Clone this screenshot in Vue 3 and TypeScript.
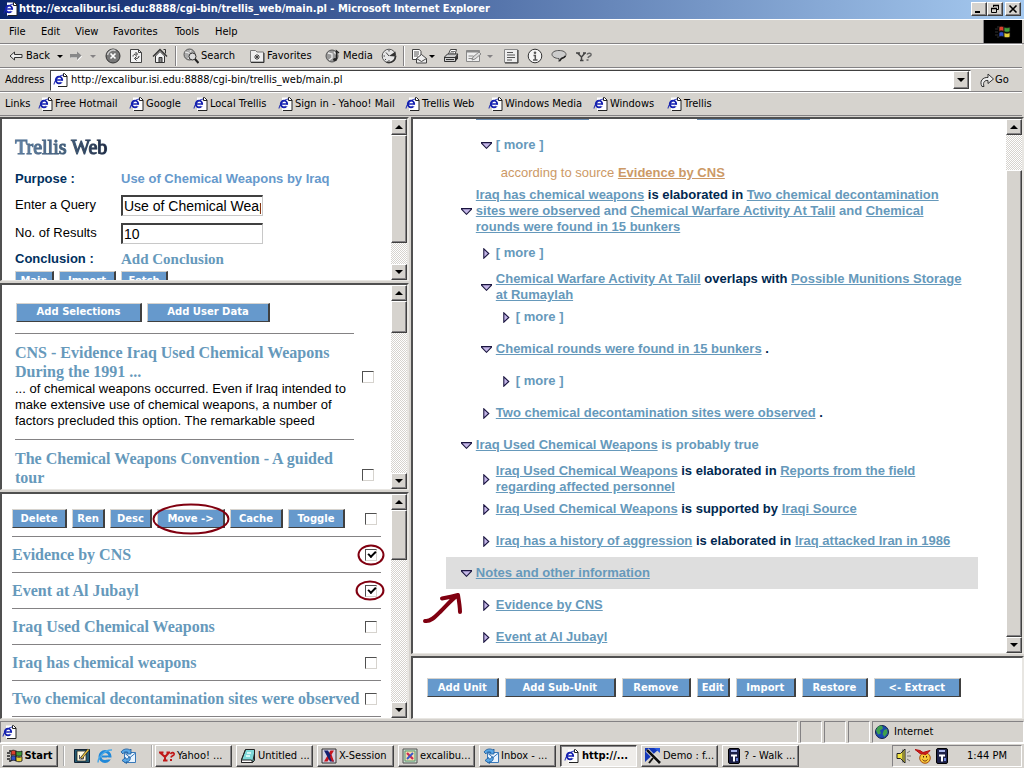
<script setup lang="ts">
import { ref } from 'vue'

type Kind = 'link' | 'rel' | 'plain'
interface Seg { k: Kind; t: string }
interface TreeRow {
  level: number
  open: boolean
  size: 'one' | 'tight' | 'two' | 'three'
  lines: Seg[][]
  marked?: boolean
}
interface Tool { icon?: string; label?: string; caret?: boolean; w: number; sep?: boolean; off?: boolean; name?: string }

const L = (t: string): Seg => ({ k: 'link', t })
const R = (t: string): Seg => ({ k: 'rel', t })
const P = (t: string): Seg => ({ k: 'plain', t })

const menus = [
  { t: 'File', w: 32 }, { t: 'Edit', w: 34 }, { t: 'View', w: 38 },
  { t: 'Favorites', w: 62 }, { t: 'Tools', w: 40 }, { t: 'Help', w: 40 },
]

const tools: Tool[] = [
  { icon: 'back', label: 'Back', caret: true, w: 60 },
  { icon: 'fwd', caret: true, w: 36, off: true, name: 'Forward' },
  { icon: 'stop', w: 23, name: 'Stop' },
  { icon: 'refresh', w: 24, name: 'Refresh' },
  { icon: 'home', w: 24, name: 'Home' },
  { sep: true, w: 8 },
  { icon: 'search', label: 'Search', w: 66 },
  { icon: 'fav', label: 'Favorites', w: 76 },
  { icon: 'media', label: 'Media', w: 56 },
  { icon: 'history', w: 22, name: 'History' },
  { sep: true, w: 8 },
  { icon: 'mail', caret: true, w: 32, name: 'Mail' },
  { icon: 'print', w: 22, name: 'Print' },
  { icon: 'edit', caret: true, w: 36, off: true, name: 'Edit page' },
  { icon: 'discuss', w: 25, name: 'Discuss' },
  { icon: 'info', w: 24, name: 'Related' },
  { icon: 'chat', w: 24, name: 'Messenger' },
  { icon: 'ymsg', w: 25, name: 'Yahoo' },
]

const links = [
  { t: 'Free Hotmail', w: 91 }, { t: 'Google', w: 64 }, { t: 'Local Trellis', w: 85 },
  { t: 'Sign in - Yahoo! Mail', w: 127 }, { t: 'Trellis Web', w: 83 },
  { t: 'Windows Media', w: 105 }, { t: 'Windows', w: 74 }, { t: 'Trellis', w: 60 },
]

const address = ref('http://excalibur.isi.edu:8888/cgi-bin/trellis_web/main.pl')
const query = ref('Use of Chemical Weapons by Iraq')
const results = ref('10')

const formButtons = [{ t: 'Main', w: 39 }, { t: 'Import', w: 57 }, { t: 'Fetch', w: 47 }]
const evidenceButtons = [{ t: 'Add Selections', w: 126 }, { t: 'Add User Data', w: 123 }]
const unitButtons = [
  { t: 'Delete', w: 55 }, { t: 'Ren', w: 33 }, { t: 'Desc', w: 42 },
  { t: 'Move ->', w: 68, ring: true }, { t: 'Cache', w: 53 }, { t: 'Toggle', w: 57 },
]
const treeButtons = [
  { t: 'Add Unit', w: 72 }, { t: 'Add Sub-Unit', w: 111 }, { t: 'Remove', w: 69 },
  { t: 'Edit', w: 33 }, { t: 'Import', w: 60 }, { t: 'Restore', w: 66 }, { t: '<- Extract', w: 87 },
]

const hits = ref([
  {
    title: ['CNS - Evidence Iraq Used Chemical Weapons', 'During the 1991 ...'],
    body: ['... of chemical weapons occurred. Even if Iraq intended to', 'make extensive use of chemical weapons, a number of', 'factors precluded this option. The remarkable speed'],
    on: false,
  },
  { title: ['The Chemical Weapons Convention - A guided', 'tour'], body: [] as string[], on: false },
])

const all = ref(false)
const units = ref([
  { t: 'Evidence by CNS', on: true, ring: 'ring-a' },
  { t: 'Event at Al Jubayl', on: true, ring: 'ring-b' },
  { t: 'Iraq Used Chemical Weapons', on: false, ring: '' },
  { t: 'Iraq has chemical weapons', on: false, ring: '' },
  { t: 'Two chemical decontamination sites were observed', on: false, ring: '' },
])

const treeTop: TreeRow[] = [
  { level: 2, open: true, size: 'one', lines: [[P('[ more ]')]] },
]
const tree: TreeRow[] = [
  {
    level: 1, open: true, size: 'three', lines: [
      [L('Iraq has chemical weapons'), R(' is elaborated in '), L('Two chemical decontamination')],
      [L('sites were observed'), P(' and '), L('Chemical Warfare Activity At Talil'), P(' and '), L('Chemical')],
      [L('rounds were found in 15 bunkers')],
    ],
  },
  { level: 2, open: false, size: 'one', lines: [[P('[ more ]')]] },
  {
    level: 2, open: true, size: 'two', lines: [
      [L('Chemical Warfare Activity At Talil'), R(' overlaps with '), L('Possible Munitions Storage')],
      [L('at Rumaylah')],
    ],
  },
  { level: 3, open: false, size: 'tight', lines: [[P('[ more ]')]] },
  { level: 2, open: true, size: 'one', lines: [[L('Chemical rounds were found in 15 bunkers'), R(' .')]] },
  { level: 3, open: false, size: 'one', lines: [[P('[ more ]')]] },
  { level: 2, open: false, size: 'one', lines: [[L('Two chemical decontamination sites were observed'), R(' .')]] },
  { level: 1, open: true, size: 'one', lines: [[L('Iraq Used Chemical Weapons'), P(' is probably true')]] },
  {
    level: 2, open: false, size: 'two', lines: [
      [L('Iraq Used Chemical Weapons'), R(' is elaborated in '), L('Reports from the field')],
      [L('regarding affected personnel')],
    ],
  },
  { level: 2, open: false, size: 'tight', lines: [[L('Iraq Used Chemical Weapons'), R(' is supported by '), L('Iraqi Source')]] },
  { level: 2, open: false, size: 'one', lines: [[L('Iraq has a history of aggression'), R(' is elaborated in '), L('Iraq attacked Iran in 1986')]] },
  { level: 1, open: true, size: 'one', marked: true, lines: [[L('Notes and other information')]] },
  { level: 2, open: false, size: 'one', lines: [[L('Evidence by CNS')]] },
  { level: 2, open: false, size: 'one', lines: [[L('Event at Al Jubayl')]] },
]

const bars = {
  form: { before: 0, thumb: 84, after: 16 },
  evidence: { before: 0, thumb: 18, after: 82 },
  units: { before: 0, thumb: 25, after: 75 },
  tree: { before: 7, thumb: 93, after: 0 },
}

const tasks = [
  { t: 'Yahoo! ...', icon: 'yahoo' }, { t: 'Untitled ...', icon: 'note' }, { t: 'X-Session', icon: 'xses' },
  { t: 'excalibu...', icon: 'xwin' }, { t: 'Inbox - ...', icon: 'outlook' }, { t: 'http://...', icon: 'page', active: true },
  { t: 'Demo : f...', icon: 'demo' }, { t: '? - Walk ...', icon: 'walk' },
]
</script>

<template>
  <svg class="defs" aria-hidden="true">
    <symbol id="i-page" viewBox="0 0 16 16">
      <path d="M4 1.500h7.500l2.500 2.500v10.500H4z" fill="#fff" />
      <path d="M10.500 1.500h1l2.500 2.500v10.500H5" fill="none" stroke="#222" />
      <path d="M10.500 1.500v3H14" fill="none" stroke="#222" />
      <ellipse cx="6" cy="8" rx="3.200" ry="3.400" fill="#fff" stroke="#1420b0" stroke-width="1.900" />
      <path d="M3 8h6.500" stroke="#1420b0" stroke-width="1.500" />
      <path d="M7.500 9.600h3" stroke="#fff" stroke-width="1.500" />
      <path d="M1 12.500C1.500 8 5.500 4 10 3" fill="none" stroke="#1420b0" />
    </symbol>
    <symbol id="i-back" viewBox="0 0 16 16"><path d="M2 8l4.500-4v2.500H14v3H6.500V12z" fill="#eee" stroke="#333" /></symbol>
    <symbol id="i-fwd" viewBox="0 0 16 16"><path d="M14 8.500L9.500 4v2.500H3v3.500h6.500v3z" fill="#fff" /><path d="M13.500 7.500L9 3.500V6H2v3.500h7V12z" fill="#888" /></symbol>
    <symbol id="i-stop" viewBox="0 0 16 16"><circle cx="8" cy="8" r="7" fill="#777" stroke="#333" /><path d="M2.500 7a6 6 0 0 1 8-4.500" fill="none" stroke="#ccc" stroke-width="1.500" /><path d="M5.500 5.500l5 5m0-5l-5 5" stroke="#fff" stroke-width="1.700" /></symbol>
    <symbol id="i-refresh" viewBox="0 0 16 16"><path d="M2.500 1.500h8l3 3v10h-11z" fill="#f4f4f4" stroke="#444" /><path d="M10.500 1.500v3h3" fill="none" stroke="#444" /><path d="M5 8.500c0-2 1.500-2.500 3.500-2.500M7.500 4l2 2-2 2M11 8c0 2-1.500 2.500-3.500 2.500M8.500 8.500l-2 2 2 2" fill="none" stroke="#333" /></symbol>
    <symbol id="i-home" viewBox="0 0 16 16"><path d="M3.500 8v6.500h9V8L8 3.500z" fill="#f4f4f4" stroke="#333" /><path d="M1 8.500l7-7 7 7" fill="none" stroke="#333" stroke-width="1.400" /><path d="M11.500 1.500h2v4" fill="none" stroke="#333" /><path d="M7 9.500h3v5H7z" fill="#888" stroke="#333" /></symbol>
    <symbol id="i-search" viewBox="0 0 16 16"><circle cx="6.500" cy="6.500" r="5.500" fill="#aaa" stroke="#555" /><path d="M2 4l4 1 1 3-2 3M8 2l-1 2" fill="none" stroke="#eee" /><circle cx="9.500" cy="8.500" r="3.500" fill="#ddd" stroke="#333" /><path d="M12 11l3.500 4" stroke="#222" stroke-width="2" /></symbol>
    <symbol id="i-fav" viewBox="0 0 16 16"><path d="M1.500 4V2.500h5L8 4h6.500v10h-13z" fill="#eee" stroke="#777" /><path d="M15 5v9.500H2" fill="none" stroke="#333" /><path d="M8 6v6M5 9h6M6 7l4 4m0-4l-4 4" stroke="#444" /></symbol>
    <symbol id="i-media" viewBox="0 0 16 16"><circle cx="7" cy="8" r="6" fill="#999" stroke="#555" /><path d="M3 5l4 1v4l-3 2M9 4l3 3" fill="none" stroke="#eee" stroke-width="1.300" /><path d="M11.500 11V3l2.500 2" fill="none" stroke="#222" stroke-width="1.400" /><ellipse cx="10" cy="11.500" rx="2" ry="1.600" fill="#222" /></symbol>
    <symbol id="i-history" viewBox="0 0 16 16"><circle cx="8" cy="8" r="6.800" fill="#e6e6e6" stroke="#555" /><path d="M8 8l6.500-4.500v5z" fill="#333" /><path d="M14.500 8a6.500 6.500 0 0 1-9 6" fill="none" stroke="#333" stroke-width="1.600" /><path d="M8 8L5 4.500M8 3.500V2M2.500 8h1.500M8 12v1.500M4 12l1-1" stroke="#444" /></symbol>
    <symbol id="i-mail" viewBox="0 0 16 16"><path d="M1.500 1.500h7l1.500 2v8h-8.500z" fill="#fff" stroke="#444" /><path d="M3 4h5M3 6h5M3 8h4" stroke="#555" /><path d="M5.500 10.500l5-4 5 4v4.500h-10z" fill="#eee" stroke="#444" /><path d="M5.500 10.500l5 3 5-3" fill="none" stroke="#444" /></symbol>
    <symbol id="i-print" viewBox="0 0 16 16"><path d="M5.500 6l2-4.500h6L12 6.500" fill="#fff" stroke="#444" /><path d="M8 3.500h4M7 5h4" stroke="#777" /><path d="M1.500 9l3-3h10.500l-2.500 3v4.500h-11z" fill="#ccc" stroke="#333" /><path d="M12.500 9L15 6.500v4l-2.500 3z" fill="#333" /><path d="M1.500 9.500h11M3 11.500h8" stroke="#333" /></symbol>
    <symbol id="i-edit" viewBox="0 0 16 16"><path d="M1.500 2.500h13v11h-13z" fill="#eee" stroke="#888" /><path d="M1.500 3.500h13" stroke="#888" stroke-width="2" /><path d="M3.500 8h5M3.500 10.500h4" stroke="#888" /><path d="M7 12l1-3 6-5 2 2-6 5z" fill="#ddd" stroke="#888" /></symbol>
    <symbol id="i-discuss" viewBox="0 0 16 16"><path d="M1.500 1.500h13v13h-13z" fill="#eee" stroke="#888" /><path d="M15 2v13H2" fill="none" stroke="#333" /><path d="M4 4.500h6M4 7h8M4 9.500h8M4 12h5" stroke="#555" /></symbol>
    <symbol id="i-info" viewBox="0 0 16 16"><circle cx="8" cy="8" r="6.800" fill="#f6f6f6" stroke="#333" /><circle cx="8" cy="4.700" r="1.300" fill="#555" /><path d="M6.500 7.500h1.800v4M6 12h4.500" fill="none" stroke="#555" stroke-width="1.500" /></symbol>
    <symbol id="i-chat" viewBox="0 0 16 16"><path d="M8 2.500c4 0 7 1.500 7 4 0 2-2 3.500-5 4L8 13.500v-3C4 10.500 1 8.500 1 6.500c0-2.500 3-4 7-4z" fill="#ccc" stroke="#555" /><path d="M14.500 8c-1 1.500-2.500 2-4 2.500l-2 2.500" fill="none" stroke="#222" stroke-width="1.500" /></symbol>
    <symbol id="i-ymsg" viewBox="0 0 16 16"><path d="M0 5h4M1.500 5l4 4v3.500M9 5L5.500 9M7 5h3M4 12.500h3.500" fill="none" stroke="#444" stroke-width="1.500" /><path d="M11 6.500c1-2 4.500-1.500 4 .5-.5 1.500-2.500 1-3 3" fill="none" stroke="#666" stroke-width="1.500" /><path d="M10.500 12h2" stroke="#666" stroke-width="1.600" /></symbol>
    <symbol id="i-go" viewBox="0 0 16 16"><path d="M3 14.500C0 9 4 5 9 5.500V2l5.500 5L9 11.500V8.500C6 8 3.500 10 5 14.500z" fill="#eee" stroke="#333" /></symbol>
    <symbol id="i-flag" viewBox="0 0 16 16">
      <path d="M0 5h3M0 8h3M0 11h3M2 3h2M2 13h2" stroke="#222" stroke-width="1.500" />
      <path d="M4 3c1.500-1 3-1 5 0v4.500c-2-1-3.500-1-5 0z" fill="#d8402c" stroke="#111" stroke-width=".8" />
      <path d="M9 3c2 1 4 1 6 0v4.500c-2 1-4 1-6 0z" fill="#3f9c3a" stroke="#111" stroke-width=".8" />
      <path d="M4 8.500c1.500-1 3-1 5 0V13c-2-1-3.500-1-5 0z" fill="#2e50c8" stroke="#111" stroke-width=".8" />
      <path d="M9 8.500c2 1 4 1 6 0V13c-2 1-4 1-6 0z" fill="#e6cf3a" stroke="#111" stroke-width=".8" />
    </symbol>
    <symbol id="i-desk" viewBox="0 0 16 16"><path d="M.5 1.500h15v13H.5z" fill="#245c74" stroke="#123" /><path d="M3 3h9v10H3z" fill="#fffbe0" stroke="#222" stroke-width=".8" /><path d="M5.500 7v4h4V7" fill="none" stroke="#556" /><path d="M7 10.500L14.500 1.500" stroke="#222" stroke-width="2.600" /><path d="M7.500 10L14.500 1.500" stroke="#e7c33e" stroke-width="1.300" /></symbol>
    <symbol id="i-ie" viewBox="0 0 16 16"><circle cx="8" cy="8.500" r="5" fill="none" stroke="#2088d8" stroke-width="3" /><path d="M5 8.500h9" stroke="#2088d8" stroke-width="2" /><path d="M10 10.500h4.500" stroke="#d6d3ce" stroke-width="2" /><path d="M1 14.500C1 9 8 1.500 15 2" fill="none" stroke="#48a8e8" stroke-width="1.500" /></symbol>
    <symbol id="i-outlook" viewBox="0 0 16 16"><path d="M4.500 4.500h11v10h-11z" fill="#e8f4ff" stroke="#3878b8" /><path d="M4.500 5l5.500 4.500L15.500 5" fill="none" stroke="#3878b8" /><path d="M1 4c2-3 6-4 9-2l1-1v5H6.500L8 4.500C6 3 3.500 4 3 6z" fill="#58a8e8" stroke="#1a5898" stroke-width=".8" /><path d="M10 9c1 3-1 5-4 5l.5 1.500L2 12.500 5.500 9.500l.5 1.500c2 0 3-1 2.500-2z" fill="#58a8e8" stroke="#1a5898" stroke-width=".8" /></symbol>
    <symbol id="i-yahoo" viewBox="0 0 16 16"><path d="M0 4.500h4.500M1.500 5l4.500 4v3.500M9.500 5L6 9M7.500 4.500H11M4 12.500h4.500" fill="none" stroke="#c01818" stroke-width="2" /><path d="M11.500 6c1-2 4-1.500 3.500.5-.5 1.500-2.500 1-3 3" fill="none" stroke="#c01818" stroke-width="1.800" /><path d="M11 12h2" stroke="#c01818" stroke-width="2" /></symbol>
    <symbol id="i-note" viewBox="0 0 16 16"><path d="M5.500 1.500h9v11l-2 2h-11v-3z" fill="#7ed8d8" stroke="#222" /><path d="M1.500 12l4-10.500M12.500 14.500l2-9" stroke="#222" /><path d="M1.500 12h10l1 2.500h-11z" fill="#fff" stroke="#222" /><path d="M7 5h4M6 8h4" stroke="#eff" stroke-width="1.500" /></symbol>
    <symbol id="i-xses" viewBox="0 0 16 16"><path d="M1 1h14v14H1z" fill="#d4d0e0" stroke="#333" /><path d="M13 2.500h-3.500L3 13.500h3.500z" fill="#c8141c" /><path d="M3 2.500h4l6 11H9z" fill="#142070" /><path d="M9 9l1.500-2.500 2.500 7H11z" fill="#c8141c" /></symbol>
    <symbol id="i-xwin" viewBox="0 0 16 16"><path d="M1 1h14v14H1z" fill="#c8dccc" stroke="#555" /><path d="M3 3h10v10H3z" fill="#f6dcb0" stroke="#5a9a70" /><path d="M5 5l6 6" stroke="#d02850" stroke-width="2.200" /><path d="M11 5l-6 6" stroke="#3858c8" stroke-width="2" /></symbol>
    <symbol id="i-demo" viewBox="0 0 16 16"><path d="M0 0h15L0 14z" fill="#1438b8" /><path d="M9 0h6v5z" fill="#2858e0" /><path d="M2 2l12 12" stroke="#fff" stroke-width="4" /><path d="M2 2l13 13" stroke="#111" stroke-width="2.600" /><path d="M4 15l4-5" stroke="#111" stroke-width="2" /></symbol>
    <symbol id="i-walk" viewBox="0 0 16 16"><rect x="2.500" y=".5" width="11" height="15" rx="1.500" fill="#1c2048" stroke="#000" /><path d="M5 3h6" stroke="#a8b4e8" stroke-width="2" /><path d="M5 6.500h6v2H9v5H7v-5H5z" fill="#fff" /><path d="M10 10h2v3h-2z" fill="#6c84d8" /></symbol>
    <symbol id="i-globe" viewBox="0 0 16 16"><circle cx="8" cy="8" r="6.500" fill="#1c48b0" stroke="#102048" /><path d="M4 2.500l4-1 1 3-3 2 1 3-3 1-2-4zM10 6l3-1 .5 4-3 4-2-3z" fill="#3fa04c" /></symbol>
    <symbol id="i-sound" viewBox="0 0 16 16"><path d="M1 5.500h3.500L9 1v14l-4.500-4.500H1z" fill="#f2e440" stroke="#222" /><path d="M7 1.500v13" stroke="#333" /><path d="M11 5l3-2M11 8h4M11 11l3 2" stroke="#777" /></symbol>
    <symbol id="i-smile" viewBox="0 0 16 16"><circle cx="10" cy="10" r="5.300" fill="#f6c838" stroke="#a85010" /><path d="M0 1.500l5 1 3 2 7-2-4 4-6-1z" fill="#d01c1c" stroke="#b01010" /><path d="M7.500 11.500c1.500 2 3.500 2 5 0" fill="none" stroke="#702808" /><path d="M8.500 8v1.500M11.500 8v1.500" stroke="#402008" /></symbol>
    <symbol id="i-down" viewBox="0 0 11 7"><path d="M1 1h9L5.500 5.700z" fill="#c4b6e8" /><path d="M0 .6h11L5.500 6.300z" fill="none" stroke="#1a1440" stroke-width="1.100" /></symbol>
    <symbol id="i-right" viewBox="0 0 7 11"><path d="M.8.800v9.400L5.800 5.500z" fill="#c4b6e8" stroke="#1a1440" stroke-width="1.100" /></symbol>
  </svg>

  <div class="screen">
    <header class="title">
      <svg class="ic"><use href="#i-page" /></svg>
      <h1>http://excalibur.isi.edu:8888/cgi-bin/trellis_web/main.pl - Microsoft Internet Explorer</h1>
      <div class="winbtns">
        <button class="raised" aria-label="Minimize"><svg viewBox="0 0 12 10"><path d="M2 8h5" stroke="#000" stroke-width="2" /></svg></button>
        <button class="raised" aria-label="Restore"><svg viewBox="0 0 12 10"><path d="M4.500 3V1.500h5v4H8M2.500 4.500h5v4h-5z" fill="none" stroke="#000" /><path d="M4 1.500h6M2 4.500h6" stroke="#000" stroke-width="1.600" /></svg></button>
        <button class="raised apart" aria-label="Close"><svg viewBox="0 0 12 10"><path d="M2.500 1.500l7 7m0-7l-7 7" stroke="#000" stroke-width="1.600" /></svg></button>
      </div>
    </header>

    <div class="menurow">
      <nav class="menus">
        <button v-for="m in menus" :key="m.t" class="flat" :style="{ width: m.w + 'px' }">{{ m.t }}</button>
      </nav>
      <div class="throb"><svg class="ic"><use href="#i-flag" /></svg></div>
    </div>

    <div class="bar tools">
      <template v-for="(b, i) in tools" :key="i">
        <span v-if="b.sep" class="sep" :style="{ width: b.w + 'px' }"></span>
        <button v-else class="flat tool" :class="{ texty: b.label || b.caret, off: b.off }" :style="{ width: b.w + 'px' }" :aria-label="b.label || b.name">
          <svg class="ic"><use :href="'#i-' + b.icon" /></svg>
          <span v-if="b.label">{{ b.label }}</span>
          <i v-if="b.caret" class="caret" :class="{ far: b.label }"></i>
        </button>
      </template>
    </div>

    <div class="bar addr">
      <label for="addr">Address</label>
      <div class="combo">
        <svg class="ic"><use href="#i-page" /></svg>
        <input id="addr" v-model="address" type="text" />
        <button class="raised drop" aria-label="Show addresses"><i class="caret"></i></button>
      </div>
      <button class="flat go"><svg class="ic"><use href="#i-go" /></svg>Go</button>
    </div>

    <div class="bar links">
      <span class="lbl">Links</span>
      <a v-for="(l, i) in links" :key="i" href="#" :style="{ width: l.w + 'px' }"><svg class="ic"><use href="#i-page" /></svg>{{ l.t }}</a>
    </div>

    <main class="frames">
      <div class="col">
        <section class="frame f-form">
          <div class="body">
            <h2 class="logo">Trellis Web</h2>
            <div class="grid">
              <span class="key">Purpose :</span><span class="val">Use of Chemical Weapons by Iraq</span>
              <label for="q">Enter a Query</label><input id="q" v-model="query" type="text" />
              <label for="n">No. of Results</label><input id="n" v-model="results" type="text" />
              <span class="key">Conclusion :</span><a class="head" href="#">Add Conclusion</a>
            </div>
            <div class="btns">
              <button v-for="b in formButtons" :key="b.t" class="btn" :style="{ width: b.w + 'px' }">{{ b.t }}</button>
            </div>
          </div>
          <div class="scroll">
            <button class="raised" aria-label="Scroll up"><i class="caret up"></i></button>
            <div class="track"><div class="raised" :style="{ flexGrow: bars.form.thumb }"></div><div :style="{ flexGrow: bars.form.after }"></div></div>
            <button class="raised" aria-label="Scroll down"><i class="caret"></i></button>
          </div>
        </section>

        <section class="frame f-evid">
          <div class="body">
            <div class="btns">
              <button v-for="b in evidenceButtons" :key="b.t" class="btn" :style="{ width: b.w + 'px' }">{{ b.t }}</button>
            </div>
            <article v-for="(h, i) in hits" :key="i" class="hit">
              <div class="txt">
                <label class="head" :for="'hit' + i"><span v-for="t in h.title" :key="t">{{ t }}</span></label>
                <p v-if="h.body.length"><span v-for="t in h.body" :key="t">{{ t }}</span></p>
              </div>
              <input :id="'hit' + i" v-model="h.on" type="checkbox" />
            </article>
          </div>
          <div class="scroll">
            <button class="raised" aria-label="Scroll up"><i class="caret up"></i></button>
            <div class="track"><div class="raised" :style="{ flexGrow: bars.evidence.thumb }"></div><div :style="{ flexGrow: bars.evidence.after }"></div></div>
            <button class="raised" aria-label="Scroll down"><i class="caret"></i></button>
          </div>
        </section>

        <section class="frame f-units">
          <div class="body">
            <div class="unit first">
              <div class="btns">
                <span v-for="b in unitButtons" :key="b.t" class="hold">
                  <button class="btn" :style="{ width: b.w + 'px' }">{{ b.t }}</button>
                  <svg v-if="b.ring" class="ring ring-m" viewBox="0 0 78 32"><ellipse cx="39" cy="16" rx="37.500" ry="14.500" /></svg>
                </span>
              </div>
              <input v-model="all" type="checkbox" aria-label="Select all" />
            </div>
            <div v-for="(u, i) in units" :key="u.t" class="unit">
              <label class="head" :for="'unit' + i">{{ u.t }}</label>
              <span class="hold">
                <input :id="'unit' + i" v-model="u.on" type="checkbox" />
                <svg v-if="u.ring" class="ring" :class="u.ring" viewBox="0 0 28 22" preserveAspectRatio="none"><ellipse cx="14" cy="11" rx="12.500" ry="9.500" /></svg>
              </span>
            </div>
          </div>
          <div class="scroll">
            <button class="raised" aria-label="Scroll up"><i class="caret up"></i></button>
            <div class="track"><div class="raised" :style="{ flexGrow: bars.units.thumb }"></div><div :style="{ flexGrow: bars.units.after }"></div></div>
            <button class="raised" aria-label="Scroll down"><i class="caret"></i></button>
          </div>
        </section>
      </div>

      <div class="col">
        <section class="frame f-tree">
          <div class="body">
            <div class="cut"><i></i><i></i></div>
            <div v-for="(r, i) in treeTop" :key="'t' + i" class="row" :class="[r.size, 'l' + r.level]">
              <span class="tw"><svg class="dn"><use href="#i-down" /></svg></span>
              <div><div v-for="(ln, j) in r.lines" :key="j" class="ln"><span v-for="(s, k) in ln" :key="k" :class="s.k">{{ s.t }}</span></div></div>
            </div>
            <p class="src">according to source <a href="#">Evidence by CNS</a></p>
            <div v-for="(r, i) in tree" :key="i" class="row" :class="[r.size, 'l' + r.level, { marked: r.marked }]">
              <span class="tw">
                <svg v-if="r.open" class="dn"><use href="#i-down" /></svg>
                <svg v-else class="rt"><use href="#i-right" /></svg>
              </span>
              <div>
                <div v-for="(ln, j) in r.lines" :key="j" class="ln">
                  <template v-for="(s, k) in ln" :key="k"><a v-if="s.k === 'link'" href="#">{{ s.t }}</a><span v-else :class="s.k">{{ s.t }}</span></template>
                </div>
              </div>
              <svg v-if="r.marked" class="arrow" viewBox="0 0 40 32"><path d="M3 29c6 1 11-5 16-10S30 7 36 3M20 6.500c6-1 11-2 16-3.500 1 6 2 12 2 17" /></svg>
            </div>
          </div>
          <div class="scroll">
            <button class="raised" aria-label="Scroll up"><i class="caret up"></i></button>
            <div class="track"><div :style="{ flexGrow: bars.tree.before }"></div><div class="raised" :style="{ flexGrow: bars.tree.thumb }"></div></div>
            <button class="raised" aria-label="Scroll down"><i class="caret"></i></button>
          </div>
        </section>
        <section class="frame f-acts">
          <div class="body btns">
            <button v-for="b in treeButtons" :key="b.t" class="btn" :style="{ width: b.w + 'px' }">{{ b.t }}</button>
          </div>
        </section>
      </div>
    </main>

    <footer class="status">
      <div class="cell grow"><svg class="ic"><use href="#i-page" /></svg></div>
      <div class="cell small"></div><div class="cell small"></div><div class="cell small"></div>
      <div class="cell zone"><svg class="ic"><use href="#i-globe" /></svg>Internet</div>
    </footer>

    <div class="taskbar">
      <button class="raised start"><svg class="ic"><use href="#i-flag" /></svg>Start</button>
      <div class="quick">
        <button class="flat" aria-label="Show desktop"><svg class="ic"><use href="#i-desk" /></svg></button>
        <button class="flat" aria-label="Internet Explorer"><svg class="ic"><use href="#i-ie" /></svg></button>
        <button class="flat" aria-label="Outlook Express"><svg class="ic"><use href="#i-outlook" /></svg></button>
      </div>
      <div class="tasks">
        <button v-for="t in tasks" :key="t.t" class="raised task" :class="{ active: t.active }"><svg class="ic"><use :href="'#i-' + t.icon" /></svg>{{ t.t }}</button>
      </div>
      <div class="tray">
        <svg class="ic"><use href="#i-sound" /></svg><svg class="ic"><use href="#i-smile" /></svg><svg class="ic"><use href="#i-walk" /></svg>
        <time>1:44 PM</time>
      </div>
    </div>
  </div>
</template>

<style>
body { margin: 0; background: #d6d3ce; }
</style>

<style scoped>
.defs { position: absolute; width: 0; height: 0; }
.screen {
  display: flex; flex-direction: column; height: 100vh; overflow: hidden;
  background: #d6d3ce; color: #000;
  font-family: "DejaVu Sans Condensed", "DejaVu Sans", sans-serif; font-size: 11px; line-height: 14px;
}
.screen * { box-sizing: border-box; }
button, input { font: inherit; color: inherit; margin: 0; padding: 0; }
h1, h2, p { margin: 0; font-weight: normal; }
a { color: inherit; text-decoration: none; }
.ic { width: 16px; height: 16px; flex: none; display: block; }
.flat { border: 0; background: none; text-align: left; white-space: nowrap; }
.raised {
  background: #d6d3ce; border: 1px solid; border-color: #fff #404040 #404040 #fff;
  box-shadow: inset -1px -1px 0 #848284; display: flex; align-items: center; justify-content: center;
}
.caret { width: 0; height: 0; border: 4px solid transparent; border-bottom: 0; border-top-color: #000; }
.caret.up { border: 4px solid transparent; border-top: 0; border-bottom-color: #000; }

.title { display: flex; align-items: center; flex: none; height: 19px; padding: 0 3px 1px; background: linear-gradient(90deg, #0a246a, #a6caf0); color: #fff; }
.title h1 { flex: 1; font-size: 11px; font-weight: bold; white-space: nowrap; overflow: hidden; }
.winbtns { display: flex; }
.winbtns button { width: 16px; height: 14px; }
.winbtns svg { width: 12px; height: 10px; }
.winbtns .apart { margin-left: 2px; }

.menurow { display: flex; flex: none; height: 25px; padding-right: 2px; border-top: 1px solid #fff; border-bottom: 1px solid #848284; }
.menus { display: flex; flex: 1; padding-left: 9px; border-right: 1px solid #848284; }
.throb { width: 38px; background: #000; display: flex; align-items: center; justify-content: center; }
.bar { display: flex; align-items: center; flex: none; height: 24px; border-top: 1px solid #fff; border-bottom: 1px solid #848284; margin-right: 2px; }
.tools { padding-left: 5px; }
.tool { display: flex; align-items: center; justify-content: center; height: 20px; }
.tool.texty { justify-content: flex-start; gap: 2px; padding-left: 3px; }
.tool .caret { border-width: 3px; border-bottom: 0; }
.tool .caret.far { margin-left: 5px; }
.tool.off .caret { border-top-color: #848284; margin-left: 4px; }
.sep { height: 20px; background: linear-gradient(90deg, transparent 3px, #848284 3px 4px, #fff 4px 5px, transparent 5px); }
.addr { padding-left: 5px; gap: 5px; }
.addr label { width: 40px; white-space: nowrap; }
.combo { flex: 1; display: flex; align-items: center; height: 21px; padding: 0 1px 0 2px; background: #fff; border: 1px solid; border-color: #404040 #fff #fff #404040; }
.combo input { flex: 1; min-width: 0; border: 0; background: none; outline: 0; padding-left: 2px; }
.drop { width: 16px; height: 18px; }
.go { display: flex; align-items: center; width: 43px; margin-left: 3px; }
.links { padding-left: 5px; border-bottom-color: #848284; }
.links .lbl { width: 33px; }
.links a { display: flex; align-items: center; gap: 1px; white-space: nowrap; }

.frames { flex: 1; min-height: 0; display: grid; grid-template-columns: 2fr 3fr; gap: 2px; padding-top: 1px; }
.col { display: flex; flex-direction: column; gap: 2px; min-width: 0; min-height: 0; }
.frame { display: flex; min-height: 0; background: #fff; border: 2px solid; border-color: #505050 #e8e6e2 #e8e6e2 #505050; border-bottom-width: 1px; overflow: hidden; font-family: "Liberation Sans", Arial, sans-serif; }
.f-form { flex: 163 1 0; }
.f-evid { flex: 208 1 0; }
.f-units { flex: 227 1 0; }
.f-tree { flex: 539 1 0; }
.f-acts { flex: 61 1 0; }
.body { flex: 1; min-width: 0; overflow: hidden; }
.scroll { width: 16px; flex: none; display: flex; flex-direction: column; }
.scroll > button { height: 16px; flex: none; }
.track { flex: 1; display: flex; flex-direction: column; background: repeating-conic-gradient(#fff 0 25%, #d6d3ce 0 50%) 0 0 / 2px 2px; }
.track > div { flex-basis: 0; }

.btns { display: flex; align-items: center; gap: 5px; }
.btn {
  flex: none; height: 19px; background: #6699cc; color: #fff; text-align: center; white-space: nowrap;
  border: 1px solid; border-color: #d6d3ce #404040 #404040 #d6d3ce; border-right-width: 2px;
  font: bold 10px/16px "DejaVu Sans", Verdana, sans-serif;
}
.head { color: #6699bb; font: bold 16px/19px "Liberation Serif", "Times New Roman", serif; white-space: nowrap; }
input[type="checkbox"] { appearance: none; flex: none; display: block; width: 12px; height: 12px; background: #fff; border: 1px solid; border-color: #505050 #d6d3ce #d6d3ce #505050; }
input[type="checkbox"]:checked { position: relative; }
input[type="checkbox"]:checked::after { content: ""; position: absolute; left: 2px; top: 1px; width: 6px; height: 3px; border: 2px solid #000; border-width: 0 0 2px 2px; transform: rotate(-45deg); }

.f-form .body { padding: 15px 0 0 13px; font-size: 13px; }
.logo { height: 33px; line-height: 26px; font-family: "Liberation Serif", serif; font-size: 20px; width: max-content; color: transparent; background: linear-gradient(90deg, #6a8cb0, #46627e 55%, #182038); background-clip: text; -webkit-text-stroke: 1px rgba(60, 84, 112, .35); }
.grid { display: grid; grid-template-columns: 106px 1fr; grid-template-rows: 24px 28px 28px 24px; align-items: center; }
.grid input { width: 142px; height: 21px; padding: 0 1px; font-size: 14px; background: #fff; border: 1px solid; border-color: #404040 #c8c8c8 #c8c8c8 #404040; border-width: 2px 1px 1px 2px; outline: 0; }
.grid .head { font-size: 15px; }
.key { font-weight: bold; color: #003060; }
.val { font-weight: bold; color: #6699cc; }

.f-evid .body { padding: 18px 0 0 13px; }
.f-evid .btns { padding-left: 1px; margin-bottom: 11px; }
.hit { display: flex; align-items: center; gap: 8px; min-height: 106px; }
.txt { width: 339px; border-top: 1px solid #848284; padding: 9px 0; align-self: stretch; }
.txt span { display: block; }
.txt p { font-size: 13px; line-height: 16px; white-space: nowrap; }
.hit input { margin-bottom: 18px; }
.hit + .hit { min-height: 90px; }

.f-units .body { padding: 7px 0 0 10px; }
.unit { display: flex; align-items: center; justify-content: space-between; width: 369px; height: 36px; padding-right: 4px; border-bottom: 1px solid #848284; }
.hold { position: relative; }
.hold .btn { display: block; }
.ring { position: absolute; fill: none; stroke: #800010; stroke-width: 2; pointer-events: none; }
.ring-m { left: -5px; top: -6px; width: 78px; height: 32px; }
.ring-a { left: -8px; top: -5px; width: 28px; height: 22px; }
.ring-b { left: -10px; top: -5px; width: 30px; height: 21px; }

.f-tree .body { padding: 0 28px 0 33px; font-size: 13px; color: #6699bb; }
.cut { height: 10px; padding-left: 30px; display: flex; gap: 108px; }
.cut i { width: 113px; height: 1px; background: #6a8cb0; }
.row { position: relative; display: flex; align-items: center; gap: 4px; font-weight: bold; line-height: 16px; }
.row a, .src a { text-decoration: underline; font-weight: bold; }
.ln { white-space: pre; }
.one { height: 32px; }
.tight { height: 28px; padding-bottom: 4px; }
.two { height: 36px; }
.three { height: 52px; }
.l1 { padding-left: 15px; }
.l2 { padding-left: 35px; }
.l3 { padding-left: 55px; }
.tw { width: 11px; flex: none; display: flex; justify-content: center; }
.dn { width: 11px; height: 7px; }
.rt { width: 7px; height: 11px; }
.rel { color: #002850; }
.marked { background: #dedede; }
.arrow { position: absolute; left: -24px; top: 35px; width: 40px; height: 32px; fill: none; stroke: #800010; stroke-width: 4; stroke-linecap: round; stroke-linejoin: round; overflow: visible; }
.src { height: 24px; line-height: 24px; padding-left: 55px; color: #cc9966; }
.f-acts .btns { gap: 6px; padding-left: 14px; }

.status { display: flex; flex: none; height: 22px; gap: 2px; margin-top: 2px; }
.cell { border: 1px solid; border-color: #848284 #fff #fff #848284; display: flex; align-items: center; gap: 4px; }
.grow { flex: 1; padding-left: 1px; }
.small { width: 22px; }
.zone { width: 152px; padding-left: 1px; }
.taskbar { display: flex; align-items: center; flex: none; height: 25px; border-top: 1px solid #fff; padding: 0 2px; }
.start { width: 56px; height: 22px; gap: 1px; font-size: 11px; font-weight: bold; }
.quick { display: flex; gap: 7px; margin-left: 5px; padding-left: 9px; width: 88px; height: 20px; align-items: center; border-left: 2px groove #fff; }
.tasks { display: flex; flex: 1; gap: 4px; padding-left: 2px; border-left: 2px groove #fff; }
.task { width: 77px; height: 22px; justify-content: flex-start; gap: 2px; padding-left: 3px; white-space: nowrap; overflow: hidden; }
.task.active { font-weight: bold; background: #efedea; border-color: #404040 #fff #fff #404040; box-shadow: inset 1px 1px 0 #848284; }
.tray { display: flex; align-items: center; gap: 3px; width: 130px; height: 22px; padding-left: 3px; border: 1px solid; border-color: #848284 #fff #fff #848284; }
.tray time { flex: 1; text-align: center; }
</style>
